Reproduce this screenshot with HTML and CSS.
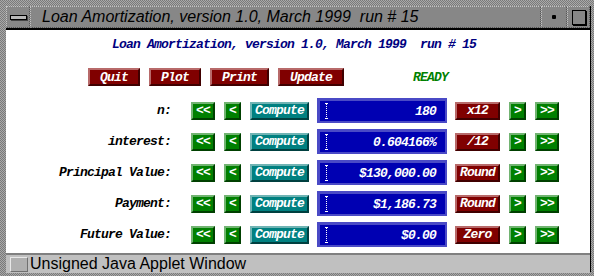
FILE: index.html
```html
<!DOCTYPE html>
<html lang="en">
<head>
    <meta charset="UTF-8">
    <title>Loan Amortization</title>
    <link rel="stylesheet" href="styles.css">
</head>

<body>
    <div class="window">
        <div class="titlebar">
            <div class="tb-btn tb-menu"><span class="menu-bar"></span></div>
            <div class="tb-title">Loan Amortization, version 1.0, March 1999  run # 15</div>
            <div class="tb-btn tb-min"><span class="min-dot"></span></div>
            <div class="tb-btn tb-max"><span class="max-box"></span></div>
        </div>

        <div class="applet">
            <div class="heading">Loan Amortization, version 1.0, March 1999  run # 15</div>

            <div class="toolbar">
                <button type="button" class="btn red w-quit">Quit</button>
                <button type="button" class="btn red w-quit">Plot</button>
                <button type="button" class="btn red w-print">Print</button>
                <button type="button" class="btn red w-update">Update</button>
                <span class="status">READY</span>
            </div>

            <!-- n -->
            <div class="row">
                <span class="label">n:</span>
                <button type="button" class="btn green w-dbl">&lt;&lt;</button>
                <button type="button" class="btn green w-one">&lt;</button>
                <button type="button" class="btn teal w-compute">Compute</button>
                <div class="field"><span class="caret"></span><span class="value">180</span></div>
                <button type="button" class="btn red w-side">x12</button>
                <button type="button" class="btn green w-one">&gt;</button>
                <button type="button" class="btn green w-dbl">&gt;&gt;</button>
            </div>

            <!-- interest -->
            <div class="row">
                <span class="label">interest:</span>
                <button type="button" class="btn green w-dbl">&lt;&lt;</button>
                <button type="button" class="btn green w-one">&lt;</button>
                <button type="button" class="btn teal w-compute">Compute</button>
                <div class="field"><span class="caret"></span><span class="value">0.604166%</span></div>
                <button type="button" class="btn red w-side">/12</button>
                <button type="button" class="btn green w-one">&gt;</button>
                <button type="button" class="btn green w-dbl">&gt;&gt;</button>
            </div>

            <!-- principal -->
            <div class="row">
                <span class="label">Principal Value:</span>
                <button type="button" class="btn green w-dbl">&lt;&lt;</button>
                <button type="button" class="btn green w-one">&lt;</button>
                <button type="button" class="btn teal w-compute">Compute</button>
                <div class="field"><span class="caret"></span><span class="value">$130,000.00</span></div>
                <button type="button" class="btn red w-side">Round</button>
                <button type="button" class="btn green w-one">&gt;</button>
                <button type="button" class="btn green w-dbl">&gt;&gt;</button>
            </div>

            <!-- payment -->
            <div class="row">
                <span class="label">Payment:</span>
                <button type="button" class="btn green w-dbl">&lt;&lt;</button>
                <button type="button" class="btn green w-one">&lt;</button>
                <button type="button" class="btn teal w-compute">Compute</button>
                <div class="field"><span class="caret"></span><span class="value">$1,186.73</span></div>
                <button type="button" class="btn red w-side">Round</button>
                <button type="button" class="btn green w-one">&gt;</button>
                <button type="button" class="btn green w-dbl">&gt;&gt;</button>
            </div>

            <!-- future value -->
            <div class="row">
                <span class="label">Future Value:</span>
                <button type="button" class="btn green w-dbl">&lt;&lt;</button>
                <button type="button" class="btn green w-one">&lt;</button>
                <button type="button" class="btn teal w-compute">Compute</button>
                <div class="field"><span class="caret"></span><span class="value">$0.00</span></div>
                <button type="button" class="btn red w-side">Zero</button>
                <button type="button" class="btn green w-one">&gt;</button>
                <button type="button" class="btn green w-dbl">&gt;&gt;</button>
            </div>
        </div>

        <div class="statusbar">
            <span class="sb-box"></span>
            <span class="sb-text">Unsigned Java Applet Window</span>
        </div>
    </div>
</body>
</html>
```

FILE: styles.css
```css
* {
    box-sizing: border-box;
    margin: 0;
    padding: 0;
}

body {
    width: 594px;
    height: 276px;
    overflow: hidden;
    background-color: #8e8e8e;
    background-image: repeating-conic-gradient(#a9a9a9 0 25%, #7a7a7a 0 50%);
    background-size: 2px 2px;
}

.window {
    position: relative;
    margin: 6px 3px 0 6px;
    width: 585px;
    height: 266px;
    display: flex;
    flex-direction: column;
    border-right: 1px solid #000;
}

/* title bar */
.titlebar {
    display: flex;
    height: 24px;
    background-color: #878787;
    border-bottom: 2px solid #000;
}

.tb-btn,
.tb-title {
    height: 22px;
    border: 1px dotted #c4c4c4;
    border-right-color: #555;
    border-bottom-color: #555;
    display: flex;
    align-items: center;
}

.tb-menu {
    width: 24px;
    justify-content: center;
}

.menu-bar {
    width: 17px;
    height: 5px;
    border: 1px solid #000;
    background-color: #b8b8b8;
    box-shadow: 1px 1px 0 #444;
}

.tb-title {
    flex: 1;
    padding-left: 11px;
    font-family: "Liberation Sans", Arial, sans-serif;
    font-style: italic;
    font-size: 16px;
    color: #000;
    white-space: pre;
}

.tb-min {
    width: 26px;
    justify-content: center;
}

.min-dot {
    width: 4px;
    height: 4px;
    background-color: #000;
    border-radius: 1px;
}

.tb-max {
    width: 23px;
    justify-content: center;
}

.max-box {
    width: 14px;
    height: 15px;
    border: 1px solid #000;
    box-shadow: 1px 1px 0 #000;
}

/* applet area */
.applet {
    flex: 1;
    background-color: #fff;
    font-family: "Liberation Mono", "Courier New", monospace;
    font-size: 13px;
    letter-spacing: -0.8px;
    font-weight: bold;
    font-style: italic;
}

.heading {
    height: 28px;
    padding: 7px 0 0 106px;
    color: #000080;
    white-space: pre;
    line-height: 15px;
}

.toolbar {
    display: flex;
    align-items: center;
    gap: 9px;
    height: 18px;
    margin: 10px 0 12px 82px;
}

.status {
    margin-left: 60px;
    color: #008000;
}

.btn {
    height: 18px;
    border: 2px solid;
    font-family: inherit;
    font-size: 13px;
    letter-spacing: -0.8px;
    font-weight: bold;
    font-style: italic;
    color: #fff;
    line-height: 13px;
    cursor: pointer;
}

.red {
    background-color: #800000;
    border-color: #b86a6a #400000 #400000 #b86a6a;
}

.green {
    background-color: #008000;
    border-color: #72b472 #004000 #004000 #72b472;
}

.teal {
    background-color: #008080;
    border-color: #70b4b4 #004040 #004040 #70b4b4;
}

.w-quit { width: 52px; }
.w-print { width: 59px; }
.w-update { width: 66px; }
.w-dbl { width: 24px; }
.w-one { width: 17px; }
.w-compute { width: 59px; }
.w-side { width: 45px; }

.row {
    display: flex;
    align-items: center;
    gap: 9px;
    height: 25px;
    margin-bottom: 6px;
}

.label {
    width: 165px;
    margin-right: 11px;
    text-align: right;
    color: #000;
}

.field {
    width: 130px;
    height: 25px;
    margin: 0 -1px;
    display: flex;
    align-items: center;
    justify-content: space-between;
    padding: 0 9px 0 5px;
    background-color: #0000b2;
    border: 2px solid #4a4ac6;
    border-left-width: 3px;
    border-top-width: 3px;
    color: #fff;
    font-size: 13px;
}

.caret {
    width: 3px;
    height: 16px;
    border-left: 1px dotted #fff;
    margin-left: 1px;
    position: relative;
}

.caret::before,
.caret::after {
    content: "";
    position: absolute;
    left: -2px;
    width: 3px;
    height: 1px;
    background-color: #fff;
}

.caret::before { top: 0; }
.caret::after { bottom: 0; }

/* status bar */
.statusbar {
    height: 21px;
    display: flex;
    align-items: center;
    background-color: #c0c0c0;
    border-top: 2px solid #808080;
}

.sb-box {
    width: 18px;
    height: 15px;
    margin: 0 2px 0 4px;
    background-color: #b0b0b0;
    border: 1px solid;
    border-color: #e8e8e8 #707070 #707070 #e8e8e8;
}

.sb-text {
    font-family: "Liberation Sans", Arial, sans-serif;
    font-size: 16px;
    color: #000;
}
```
